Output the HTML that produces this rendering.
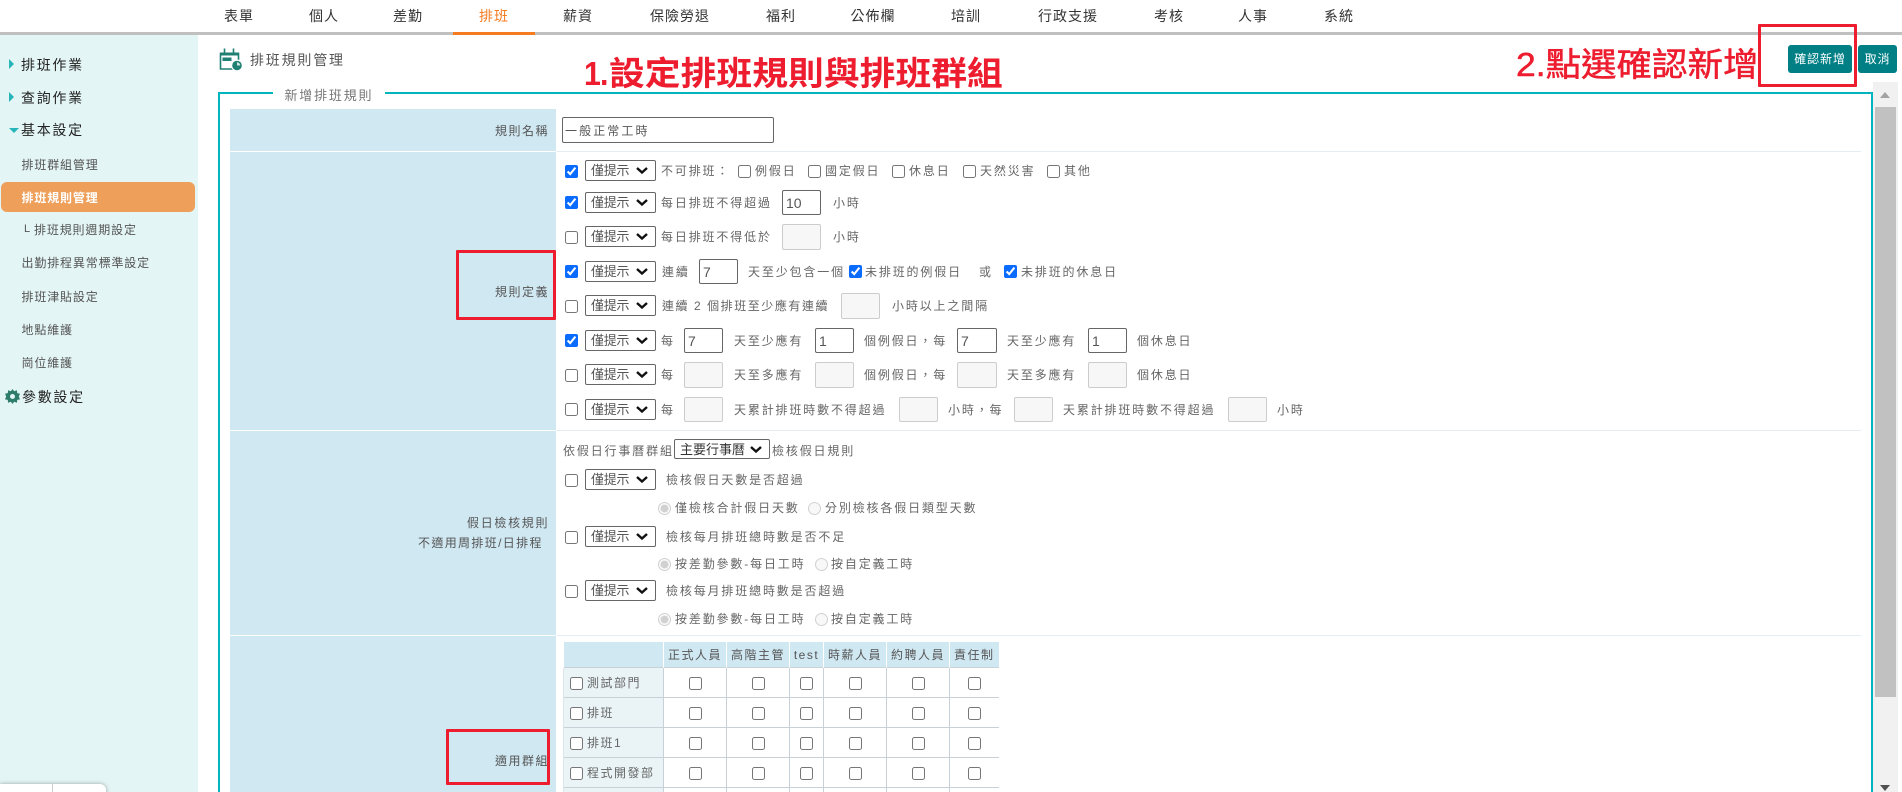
<!DOCTYPE html>
<html lang="zh-Hant"><head><meta charset="utf-8"><title>排班規則管理</title>
<style>
html,body{margin:0;padding:0;width:1902px;height:792px;overflow:hidden;background:#fff}
body{position:relative;font-family:"Liberation Sans","Noto Sans CJK TC",sans-serif;font-size:12px;color:#666}
.a,.t,.n,.s,.m,input,select,.l,.c{position:absolute}
.t{height:20px;line-height:20px;white-space:nowrap;letter-spacing:1.85px;color:#666}
.l{height:20px;line-height:20px;white-space:nowrap;letter-spacing:1.5px;color:#555}
.n{top:6px;height:20px;line-height:20px;font-size:14px;letter-spacing:1px;color:#333;white-space:nowrap;transform:translateX(-50%)}
.m{left:21px;height:20px;line-height:20px;font-size:14px;letter-spacing:1.7px;color:#222;white-space:nowrap}
.s{left:21.5px;height:20px;line-height:20px;font-size:12px;letter-spacing:.85px;color:#555;white-space:nowrap}
input[type=checkbox],input[type=radio]{margin:0;width:13px;height:13px;accent-color:#0a6cff}
input[type=text]{box-sizing:border-box;height:25px;width:39px;border:1px solid #666;border-radius:2px;padding:0 3px;font:14px "Liberation Sans","Noto Sans CJK TC",sans-serif;color:#555;background:#fff;outline:0}
input.d{background:#f7f7f7;border-color:#ccc}
select{box-sizing:border-box;appearance:none;-webkit-appearance:none;left:585px;width:71px;height:21px;padding:0 0 0 5px;font:13px "Liberation Sans","Noto Sans CJK TC",sans-serif;letter-spacing:-.3px;color:#555;background:#fff;border:1px solid #666;border-radius:2px;outline:0}
.c{left:636px;width:12px;height:7px;pointer-events:none}
.c path{fill:none;stroke:#111;stroke-width:2.4}
.r{box-sizing:border-box;position:absolute;border:3px solid #ed1c2e;border-radius:1px}
table{position:absolute;left:563px;top:642px;border-collapse:collapse;table-layout:fixed;width:435px}
th{height:25px;padding:0;background:#d0e8f2;font-weight:400;color:#555;letter-spacing:1.5px;border-left:1px solid #fff;font-size:12px;white-space:nowrap;overflow:hidden}
td{height:29px;padding:0;border-top:1px solid #c8d0d8;border-left:1px solid #c8d0d8;text-align:center;color:#666;letter-spacing:1.5px}
td input{position:static!important;vertical-align:middle}
td.g{background:#eaf4f6;text-align:left;padding-left:6px;white-space:nowrap;border-left-color:#dfe6ea}
td.g input{margin-right:4px}
.ann{left:586px;height:44px;line-height:44px;font-size:33px;color:#ed1c2e;white-space:nowrap;z-index:5;transform-origin:0 50%}
</style></head><body>

<!-- Top nav -->
<div class="a" style="left:0;top:32px;width:1902px;height:3px;background:#c0c0c0"></div>
<div class="a" style="left:453px;top:32px;width:82px;height:3px;background:#f47b20"></div>
<div class="n" style="left:239px">表單</div>
<div class="n" style="left:324px">個人</div>
<div class="n" style="left:408px">差勤</div>
<div class="n" style="left:494px;color:#f47b20">排班</div>
<div class="n" style="left:578px">薪資</div>
<div class="n" style="left:680px">保險勞退</div>
<div class="n" style="left:781px">福利</div>
<div class="n" style="left:873px">公佈欄</div>
<div class="n" style="left:966px">培訓</div>
<div class="n" style="left:1068px">行政支援</div>
<div class="n" style="left:1169px">考核</div>
<div class="n" style="left:1253px">人事</div>
<div class="n" style="left:1339px">系統</div>

<!-- Sidebar -->
<div class="a" style="left:0;top:35px;width:198px;height:757px;background:#e4f5f5"></div>
<div class="a" style="left:9px;top:59px;width:0;height:0;border-left:5px solid #26b5b9;border-top:5.5px solid transparent;border-bottom:5.5px solid transparent"></div>
<div class="a" style="left:9px;top:92px;width:0;height:0;border-left:5px solid #26b5b9;border-top:5.5px solid transparent;border-bottom:5.5px solid transparent"></div>
<div class="a" style="left:9px;top:128px;width:0;height:0;border-top:5px solid #26b5b9;border-left:5px solid transparent;border-right:5px solid transparent"></div>
<div class="m" style="top:55px">排班作業</div>
<div class="m" style="top:88px">查詢作業</div>
<div class="m" style="top:120px">基本設定</div>
<div class="s" style="top:155px">排班群組管理</div>
<div class="a" style="left:1px;top:182px;width:194px;height:30px;background:#ee9f5a;border-radius:6px"></div>
<div class="s" style="top:188px;color:#fff;font-weight:700">排班規則管理</div>
<div class="s" style="top:219px;left:24px;font-size:11px">L</div>
<div class="s" style="top:220px;left:34px">排班規則週期設定</div>
<div class="s" style="top:253px">出勤排程異常標準設定</div>
<div class="s" style="top:287px">排班津貼設定</div>
<div class="s" style="top:320px">地點維護</div>
<div class="s" style="top:353px">崗位維護</div>
<svg class="a" style="left:5px;top:389px" width="15" height="15" viewBox="0 0 24 24"><path fill="#2e7d6b" fill-rule="evenodd" d="M12 0l2.600 3.600 4.400-1.600.6 4.600 4.400.9-1.900 4.500 1.900 4.500-4.400.9-.6 4.600-4.400-1.600L12 24l-2.600-3.600L5 22l-.6-4.600L0 16.500l1.900-4.500L0 7.500l4.400-.9L5 2l4.400 1.600zM12 8a4 4 0 1 0 0 8 4 4 0 0 0 0-8z"/></svg>
<div class="m" style="top:387px;left:22px">參數設定</div>
<div class="a" style="left:0;top:784px;width:106px;height:12px;background:#fff;border-radius:0 6px 0 0;box-shadow:0 0 4px rgba(0,0,0,.35)"></div>
<div class="a" style="left:52px;top:784px;width:1px;height:8px;background:#ccc"></div>

<!-- Page heading -->
<svg class="a" style="left:219px;top:47px" width="24" height="24" viewBox="0 0 24 24">
<g fill="none" stroke="#1f7f72" stroke-width="1.600"><path d="M14 22H1.500V6.500h18V13"/><path d="M5.500 1.500v5M14.500 1.500v5"/></g>
<rect x="1" y="5.500" width="19" height="3" fill="#1f7f72"/>
<rect x="3.500" y="10.500" width="9" height="3.500" fill="#1f7f72"/>
<circle cx="18" cy="18.500" r="6" fill="#fff"/>
<circle cx="18" cy="18.500" r="4.800" fill="#1f7f72"/>
<path d="M18 18.500v-3.200a3.200 3.200 0 0 1 3.200 3.200z" fill="#cfe6e0"/>
</svg>
<div class="t" style="left:250px;top:50px;font-size:14px;letter-spacing:1.8px;color:#555">排班規則管理</div>

<!-- Fieldset -->
<div class="a" style="left:218px;top:92px;width:2px;height:700px;background:#00b5bd"></div>
<div class="a" style="left:218px;top:92px;width:55px;height:2px;background:#00b5bd"></div>
<div class="a" style="left:385px;top:92px;width:1488px;height:2px;background:#00b5bd"></div>
<div class="a" style="left:1871px;top:92px;width:2px;height:700px;background:#00b5bd"></div>
<div class="t" style="left:284.500px;top:86px;font-size:13px;letter-spacing:1.800px;color:#777">新增排班規則</div>

<!-- Left label column -->
<div class="a" style="left:230px;top:109px;width:326px;height:683px;background:#d0e8f2"></div>
<div class="a" style="left:230px;top:151px;width:326px;height:1px;background:#fff"></div>
<div class="a" style="left:230px;top:430px;width:326px;height:1px;background:#fff"></div>
<div class="a" style="left:230px;top:635px;width:326px;height:1px;background:#fff"></div>
<div class="a" style="left:556px;top:151px;width:1305px;height:1px;background:#e4edf2"></div>
<div class="a" style="left:556px;top:430px;width:1305px;height:1px;background:#e4edf2"></div>
<div class="a" style="left:556px;top:635px;width:1305px;height:1px;background:#e4edf2"></div>
<div class="l" style="left:495px;top:121px">規則名稱</div>
<div class="l" style="left:495px;top:282px">規則定義</div>
<div class="l" style="left:467px;top:513px;letter-spacing:1.7px">假日檢核規則</div>
<div class="l" style="left:418px;top:533px;letter-spacing:1.35px">不適用周排班/日排程</div>
<div class="l" style="left:495px;top:751px">適用群組</div>

<!-- Row: name -->
<input type="text" value="一般正常工時" style="left:562px;top:117px;width:212px;height:26px;padding:0 2px;font-size:12px;letter-spacing:2.1px">

<!-- r1 -->
<input type="checkbox" checked style="left:565px;top:165px">
<select style="top:160px"><option>僅提示</option></select><svg class="c" style="top:167px" viewBox="0 0 12 7"><path d="M1 1l5 4.500 5-4.500"/></svg>
<div class="t" style="left:661px;top:161px">不可排班：</div>
<input type="checkbox" style="left:738px;top:165px"><div class="t" style="left:755px;top:161px">例假日</div>
<input type="checkbox" style="left:808px;top:165px"><div class="t" style="left:825px;top:161px">國定假日</div>
<input type="checkbox" style="left:892px;top:165px"><div class="t" style="left:909px;top:161px">休息日</div>
<input type="checkbox" style="left:963px;top:165px"><div class="t" style="left:980px;top:161px">天然災害</div>
<input type="checkbox" style="left:1047px;top:165px"><div class="t" style="left:1064px;top:161px">其他</div>

<!-- r2 -->
<input type="checkbox" checked style="left:565px;top:196px">
<select style="top:192px"><option>僅提示</option></select><svg class="c" style="top:199px" viewBox="0 0 12 7"><path d="M1 1l5 4.500 5-4.500"/></svg>
<div class="t" style="left:661px;top:193px">每日排班不得超過</div>
<input type="text" value="10" style="left:782px;top:190px;height:25px">
<div class="t" style="left:833px;top:193px">小時</div>

<!-- r3 -->
<input type="checkbox" style="left:565px;top:231px">
<select style="top:226px"><option>僅提示</option></select><svg class="c" style="top:233px" viewBox="0 0 12 7"><path d="M1 1l5 4.500 5-4.500"/></svg>
<div class="t" style="left:661px;top:227px">每日排班不得低於</div>
<input type="text" class="d" style="left:782px;top:224px;height:26px">
<div class="t" style="left:833px;top:227px">小時</div>

<!-- r4 -->
<input type="checkbox" checked style="left:565px;top:265px">
<select style="top:261px"><option>僅提示</option></select><svg class="c" style="top:268px" viewBox="0 0 12 7"><path d="M1 1l5 4.500 5-4.500"/></svg>
<div class="t" style="left:662px;top:262px">連續</div>
<input type="text" value="7" style="left:699px;top:259px;height:25px">
<div class="t" style="left:748px;top:262px">天至少包含一個</div>
<input type="checkbox" checked style="left:849px;top:265px">
<div class="t" style="left:865px;top:262px">未排班的例假日</div>
<div class="t" style="left:979px;top:262px">或</div>
<input type="checkbox" checked style="left:1004px;top:265px">
<div class="t" style="left:1021px;top:262px">未排班的休息日</div>

<!-- r5 -->
<input type="checkbox" style="left:565px;top:300px">
<select style="top:295px"><option>僅提示</option></select><svg class="c" style="top:302px" viewBox="0 0 12 7"><path d="M1 1l5 4.500 5-4.500"/></svg>
<div class="t" style="left:662px;top:296px;letter-spacing:1.55px">連續 2 個排班至少應有連續</div>
<input type="text" class="d" style="left:841px;top:293px;height:26px">
<div class="t" style="left:892px;top:296px">小時以上之間隔</div>

<!-- r6 -->
<input type="checkbox" checked style="left:565px;top:334px">
<select style="top:330px"><option>僅提示</option></select><svg class="c" style="top:337px" viewBox="0 0 12 7"><path d="M1 1l5 4.500 5-4.500"/></svg>
<div class="t" style="left:661px;top:331px">每</div>
<input type="text" value="7" style="left:684px;top:328px;height:25px">
<div class="t" style="left:734px;top:331px">天至少應有</div>
<input type="text" value="1" style="left:815px;top:328px;height:25px">
<div class="t" style="left:864px;top:331px">個例假日，每</div>
<input type="text" value="7" style="left:957px;top:328px;height:25px;width:40px">
<div class="t" style="left:1007px;top:331px">天至少應有</div>
<input type="text" value="1" style="left:1088px;top:328px;height:25px">
<div class="t" style="left:1137px;top:331px">個休息日</div>

<!-- r7 -->
<input type="checkbox" style="left:565px;top:369px">
<select style="top:364px"><option>僅提示</option></select><svg class="c" style="top:371px" viewBox="0 0 12 7"><path d="M1 1l5 4.500 5-4.500"/></svg>
<div class="t" style="left:661px;top:365px">每</div>
<input type="text" class="d" style="left:684px;top:362px;height:26px">
<div class="t" style="left:734px;top:365px">天至多應有</div>
<input type="text" class="d" style="left:815px;top:362px;height:26px">
<div class="t" style="left:864px;top:365px">個例假日，每</div>
<input type="text" class="d" style="left:957px;top:362px;height:26px;width:40px">
<div class="t" style="left:1007px;top:365px">天至多應有</div>
<input type="text" class="d" style="left:1088px;top:362px;height:26px">
<div class="t" style="left:1137px;top:365px">個休息日</div>

<!-- r8 -->
<input type="checkbox" style="left:565px;top:403px">
<select style="top:399px"><option>僅提示</option></select><svg class="c" style="top:406px" viewBox="0 0 12 7"><path d="M1 1l5 4.500 5-4.500"/></svg>
<div class="t" style="left:661px;top:400px">每</div>
<input type="text" class="d" style="left:684px;top:397px;height:25px">
<div class="t" style="left:734px;top:400px">天累計排班時數不得超過</div>
<input type="text" class="d" style="left:899px;top:397px;height:25px">
<div class="t" style="left:948px;top:400px">小時，每</div>
<input type="text" class="d" style="left:1014px;top:397px;height:25px">
<div class="t" style="left:1063px;top:400px">天累計排班時數不得超過</div>
<input type="text" class="d" style="left:1228px;top:397px;height:25px">
<div class="t" style="left:1277px;top:400px">小時</div>

<!-- Holiday section -->
<div class="t" style="left:563px;top:441px">依假日行事曆群組</div>
<select style="left:674px;top:439px;width:96px;height:20px;color:#333;letter-spacing:0"><option>主要行事曆</option></select><svg class="c" style="left:750px;top:446px" viewBox="0 0 12 7"><path d="M1 1l5 4.500 5-4.500"/></svg>
<div class="t" style="left:772px;top:441px">檢核假日規則</div>

<input type="checkbox" style="left:565px;top:474px">
<select style="top:469px"><option>僅提示</option></select><svg class="c" style="top:476px" viewBox="0 0 12 7"><path d="M1 1l5 4.500 5-4.500"/></svg>
<div class="t" style="left:666px;top:470px">檢核假日天數是否超過</div>
<input type="radio" checked disabled style="left:658px;top:502px">
<div class="t" style="left:675px;top:498px">僅檢核合計假日天數</div>
<input type="radio" disabled style="left:808px;top:502px">
<div class="t" style="left:825px;top:498px">分別檢核各假日類型天數</div>

<input type="checkbox" style="left:565px;top:531px">
<select style="top:526px"><option>僅提示</option></select><svg class="c" style="top:533px" viewBox="0 0 12 7"><path d="M1 1l5 4.500 5-4.500"/></svg>
<div class="t" style="left:666px;top:527px">檢核每月排班總時數是否不足</div>
<input type="radio" checked disabled style="left:658px;top:558px">
<div class="t" style="left:675px;top:554px">按差勤參數-每日工時</div>
<input type="radio" disabled style="left:815px;top:558px">
<div class="t" style="left:831px;top:554px">按自定義工時</div>

<input type="checkbox" style="left:565px;top:585px">
<select style="top:580px"><option>僅提示</option></select><svg class="c" style="top:587px" viewBox="0 0 12 7"><path d="M1 1l5 4.500 5-4.500"/></svg>
<div class="t" style="left:666px;top:581px">檢核每月排班總時數是否超過</div>
<input type="radio" checked disabled style="left:658px;top:613px">
<div class="t" style="left:675px;top:609px">按差勤參數-每日工時</div>
<input type="radio" disabled style="left:815px;top:613px">
<div class="t" style="left:831px;top:609px">按自定義工時</div>

<!-- Group table -->
<table>
<colgroup><col style="width:100px"><col style="width:63px"><col style="width:63px"><col style="width:34px"><col style="width:63px"><col style="width:63px"><col style="width:49px"></colgroup>
<tr><th></th><th>正式人員</th><th>高階主管</th><th>test</th><th>時薪人員</th><th>約聘人員</th><th>責任制</th></tr>
<tr><td class="g"><input type="checkbox">測試部門</td><td><input type="checkbox"></td><td><input type="checkbox"></td><td><input type="checkbox"></td><td><input type="checkbox"></td><td><input type="checkbox"></td><td><input type="checkbox"></td></tr>
<tr><td class="g"><input type="checkbox">排班</td><td><input type="checkbox"></td><td><input type="checkbox"></td><td><input type="checkbox"></td><td><input type="checkbox"></td><td><input type="checkbox"></td><td><input type="checkbox"></td></tr>
<tr><td class="g"><input type="checkbox">排班1</td><td><input type="checkbox"></td><td><input type="checkbox"></td><td><input type="checkbox"></td><td><input type="checkbox"></td><td><input type="checkbox"></td><td><input type="checkbox"></td></tr>
<tr><td class="g"><input type="checkbox">程式開發部</td><td><input type="checkbox"></td><td><input type="checkbox"></td><td><input type="checkbox"></td><td><input type="checkbox"></td><td><input type="checkbox"></td><td><input type="checkbox"></td></tr>
<tr><td class="g"></td><td></td><td></td><td></td><td></td><td></td><td></td></tr>
</table>

<!-- Buttons -->
<div class="a" style="left:1788px;top:45px;width:64px;height:28px;background:#007f85;border-radius:3px;color:#fff;text-align:center;line-height:28px;letter-spacing:.9px">確認新增</div>
<div class="a" style="left:1858px;top:45px;width:39px;height:28px;background:#007f85;border-radius:3px;color:#fff;text-align:center;line-height:28px;letter-spacing:.9px">取消</div>

<!-- Scrollbar -->
<div class="a" style="left:1873px;top:82px;width:25px;height:710px;background:#f1f1f1"></div>
<div class="a" style="left:1875px;top:107px;width:21px;height:590px;background:#c1c1c1"></div>
<div class="a" style="left:1880px;top:92px;width:0;height:0;border-bottom:6px solid #a3a3a3;border-left:5.5px solid transparent;border-right:5.5px solid transparent"></div>
<div class="a" style="left:1880px;top:785px;width:0;height:0;border-top:6px solid #505050;border-left:5.5px solid transparent;border-right:5.5px solid transparent"></div>

<!-- Annotations -->
<div class="a ann" style="top:52px;left:584px;font-weight:700;letter-spacing:-1px;transform:scaleX(.92)">1.</div>
<div class="a ann" style="top:52px;left:609px;font-weight:700;transform:scaleX(1.085)">設定排班規則與排班群組</div>
<div class="a ann" style="left:1516px;top:43px;-webkit-text-stroke:.5px #ed1c2e;transform:scaleX(1.075)">2.點選確認新增</div>
<div class="r" style="left:1758px;top:24px;width:99px;height:63px;z-index:5"></div>
<div class="r" style="left:456px;top:250px;width:100px;height:70px;z-index:5"></div>
<div class="r" style="left:446px;top:729px;width:104px;height:56px;z-index:5"></div>
</body></html>
